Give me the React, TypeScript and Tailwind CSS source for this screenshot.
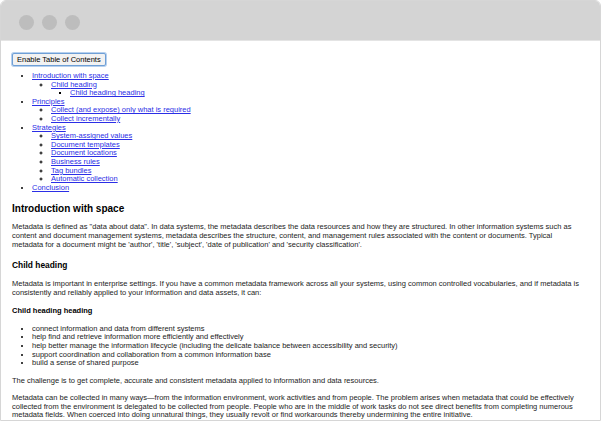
import React from "react";

const linkCls = "text-[#2b2ee6] underline";

const TocLink: React.FC<{ label: string }> = ({ label }) => (
  <a href="#" className={linkCls}>
    {label}
  </a>
);

const App: React.FC = () => {
  return (
    <div className="w-[602px] h-[422px] bg-white antialiased">
      <div className="w-[601px] h-[421px] border border-[#d6d6d6] rounded-t-[6px] overflow-hidden flex flex-col bg-white">
        {/* window chrome */}
        <div className="h-[40px] shrink-0 bg-[#d4d4d4] border-b border-[#e4e4e4] flex items-start gap-[8px] pl-[18px] pt-[14px]">
          <span className="w-[15px] h-[15px] rounded-full bg-[#bdbdbd]" />
          <span className="w-[15px] h-[15px] rounded-full bg-[#bdbdbd]" />
          <span className="w-[15px] h-[15px] rounded-full bg-[#bdbdbd]" />
        </div>

        <div
          className="flex-1 overflow-hidden pt-[12px] pl-[11px] pr-[10px] text-[7.5px] leading-[8.6px] text-[#1c1c1c]"
          style={{ fontFamily: '"Liberation Sans", Arial, sans-serif' }}
        >
          <div>
            <button className="h-[13px] px-[4px] leading-none text-[7.5px] text-black bg-[#f2f2f2] border border-[#6e9fd6] rounded-[2px] shadow-[0_0_0_1px_#b6d0ee]">
              Enable Table of Contents
            </button>
          </div>

          <ul className="mt-[6px] pl-[20px] list-disc marker:text-black">
            <li>
              <TocLink label="Introduction with space" />
              <ul className="pl-[19px] list-[circle] marker:text-[#555]">
                <li>
                  <TocLink label="Child heading" />
                  <ul className="pl-[19px] list-[square] marker:text-black">
                    <li>
                      <TocLink label="Child heading heading" />
                    </li>
                  </ul>
                </li>
              </ul>
            </li>
            <li>
              <TocLink label="Principles" />
              <ul className="pl-[19px] list-[circle] marker:text-[#555]">
                <li>
                  <TocLink label="Collect (and expose) only what is required" />
                </li>
                <li>
                  <TocLink label="Collect incrementally" />
                </li>
              </ul>
            </li>
            <li>
              <TocLink label="Strategies" />
              <ul className="pl-[19px] list-[circle] marker:text-[#555]">
                <li>
                  <TocLink label="System-assigned values" />
                </li>
                <li>
                  <TocLink label="Document templates" />
                </li>
                <li>
                  <TocLink label="Document locations" />
                </li>
                <li>
                  <TocLink label="Business rules" />
                </li>
                <li>
                  <TocLink label="Tag bundles" />
                </li>
                <li>
                  <TocLink label="Automatic collection" />
                </li>
              </ul>
            </li>
            <li>
              <TocLink label="Conclusion" />
            </li>
          </ul>

          <h2 className="mt-[10px] text-[10px] leading-[13px] font-bold text-black">
            Introduction with space
          </h2>
          <p className="mt-[8px] max-w-[565px]">
            Metadata is defined as "data about data". In data systems, the metadata describes the data resources and how they are
            structured. In other information systems such as content and document management systems, metadata describes the
            structure, content, and management rules associated with the content or documents. Typical metadata for a document
            might be 'author', 'title', 'subject', 'date of publication' and 'security classification'.
          </p>

          <h3 className="mt-[11px] text-[8.4px] leading-[10px] font-bold text-black">Child heading</h3>
          <p className="mt-[10px]">
            Metadata is important in enterprise settings. If you have a common metadata framework across all your systems, using
            common controlled vocabularies, and if metadata is consistently and reliably applied to your information and data
            assets, it can:
          </p>

          <h4 className="mt-[10px] font-bold text-black">Child heading heading</h4>
          <ul className="mt-[9px] pl-[20px] list-disc marker:text-black">
            <li>connect information and data from different systems</li>
            <li>help find and retrieve information more efficiently and effectively</li>
            <li>help better manage the information lifecycle (including the delicate balance between accessibility and security)</li>
            <li>support coordination and collaboration from a common information base</li>
            <li>build a sense of shared purpose</li>
          </ul>

          <p className="mt-[9px]">
            The challenge is to get complete, accurate and consistent metadata applied to information and data resources.
          </p>
          <p className="mt-[8.5px]">
            Metadata can be collected in many ways—from the information environment, work activities and from people. The
            problem arises when metadata that could be effectively collected from the environment is delegated to be collected
            from people. People who are in the middle of work tasks do not see direct benefits from completing numerous metadata
            fields. When coerced into doing unnatural things, they usually revolt or find workarounds thereby undermining the
            entire initiative.
          </p>
        </div>
      </div>
    </div>
  );
};

export default App;
